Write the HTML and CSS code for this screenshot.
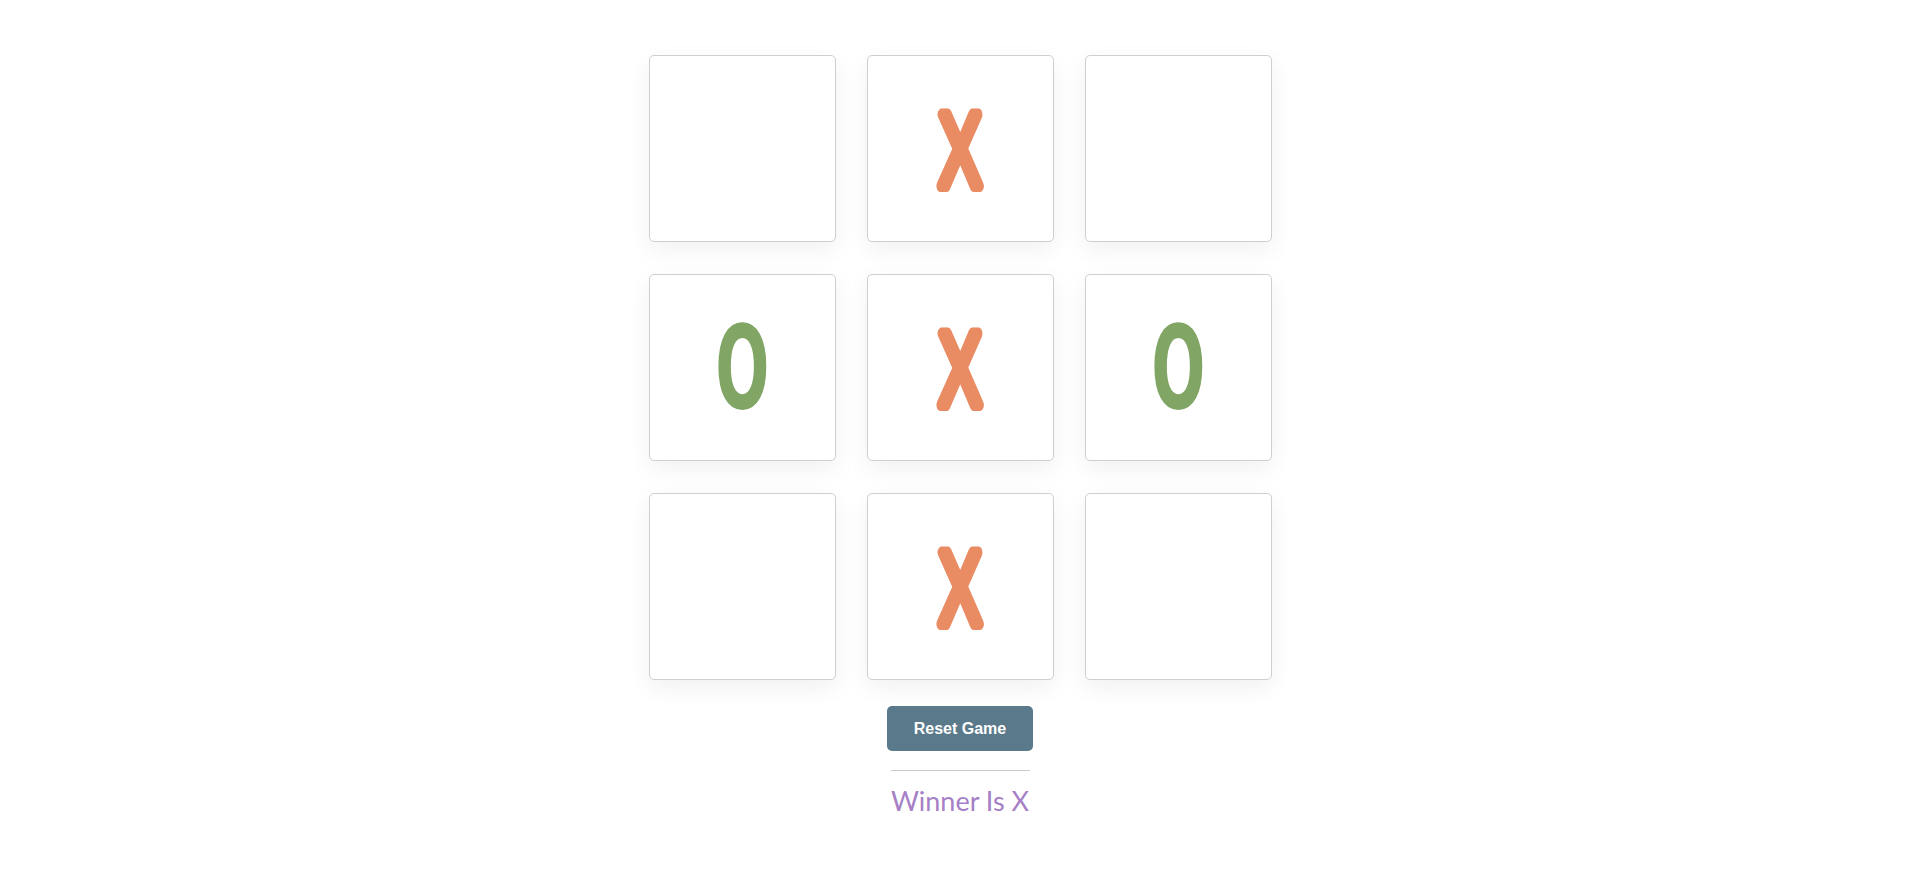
FILE: index.html
```html
<!DOCTYPE html>
<html lang="en">
<head>
<meta charset="utf-8">
<title>Tic Tac Toe</title>
<link rel="stylesheet" href="styles.css">
</head>
<body>
<main class="game">
  <div class="board">
    <div class="cell"></div>
    <div class="cell"><svg class="mark-x" width="52" height="88" viewBox="0 0 52 88"><text x="41.9" y="80.5" text-anchor="middle" transform="scale(0.62 1)">X</text></svg></div>
    <div class="cell"></div>
    <div class="cell"><span class="mark mark-o">O</span></div>
    <div class="cell"><svg class="mark-x" width="52" height="88" viewBox="0 0 52 88"><text x="41.9" y="80.5" text-anchor="middle" transform="scale(0.62 1)">X</text></svg></div>
    <div class="cell"><span class="mark mark-o">O</span></div>
    <div class="cell"></div>
    <div class="cell"><svg class="mark-x" width="52" height="88" viewBox="0 0 52 88"><text x="41.9" y="80.5" text-anchor="middle" transform="scale(0.62 1)">X</text></svg></div>
    <div class="cell"></div>
  </div>
  <button class="reset">Reset Game</button>
  <hr class="divider">
  <p class="status">Winner Is X</p>
</main>
</body>
</html>
```
FILE: styles.css
```css
html, body {
  margin: 0;
  padding: 0;
  background: #ffffff;
}

.game {
  display: flex;
  flex-direction: column;
  align-items: center;
  padding-top: 55px;
}

.board {
  display: grid;
  grid-template-columns: repeat(3, 187px);
  grid-auto-rows: 187px;
  column-gap: 31px;
  row-gap: 32px;
}

.cell {
  box-sizing: border-box;
  border: 1px solid #cfcfcf;
  border-radius: 5px;
  background: #fff;
  box-shadow: 0 8px 24px rgba(0, 0, 0, 0.06);
  display: flex;
  align-items: center;
  justify-content: center;
}

.mark-x {
  display: block;
  overflow: visible;
}

.mark-x text {
  font-family: "Liberation Sans", Arial, sans-serif;
  font-size: 103px;
  fill: #e98b63;
  stroke: #e98b63;
  stroke-width: 12px;
  stroke-linejoin: round;
  stroke-linecap: round;
}

.mark {
  font-family: "DejaVu Sans", sans-serif;
  font-size: 116px;
  line-height: 1;
  display: inline-block;
}

.mark-o {
  color: #80a565;
  font-weight: bold;
  transform: scaleX(0.55);
}

.reset {
  margin-top: 26px;
  width: 146px;
  height: 45px;
  border: none;
  border-radius: 5px;
  background: #5a7a8b;
  color: #fff;
  font-family: "Liberation Sans", Arial, sans-serif;
  font-weight: bold;
  font-size: 16px;
  cursor: pointer;
}

.divider {
  width: 139px;
  margin: 19px 0 0;
  border: none;
  border-top: 1px solid #cccccc;
}

.status {
  margin: 13px 0 0;
  font-family: "Lato", sans-serif;
  font-size: 27px;
  color: #a67fc6;
}
```
